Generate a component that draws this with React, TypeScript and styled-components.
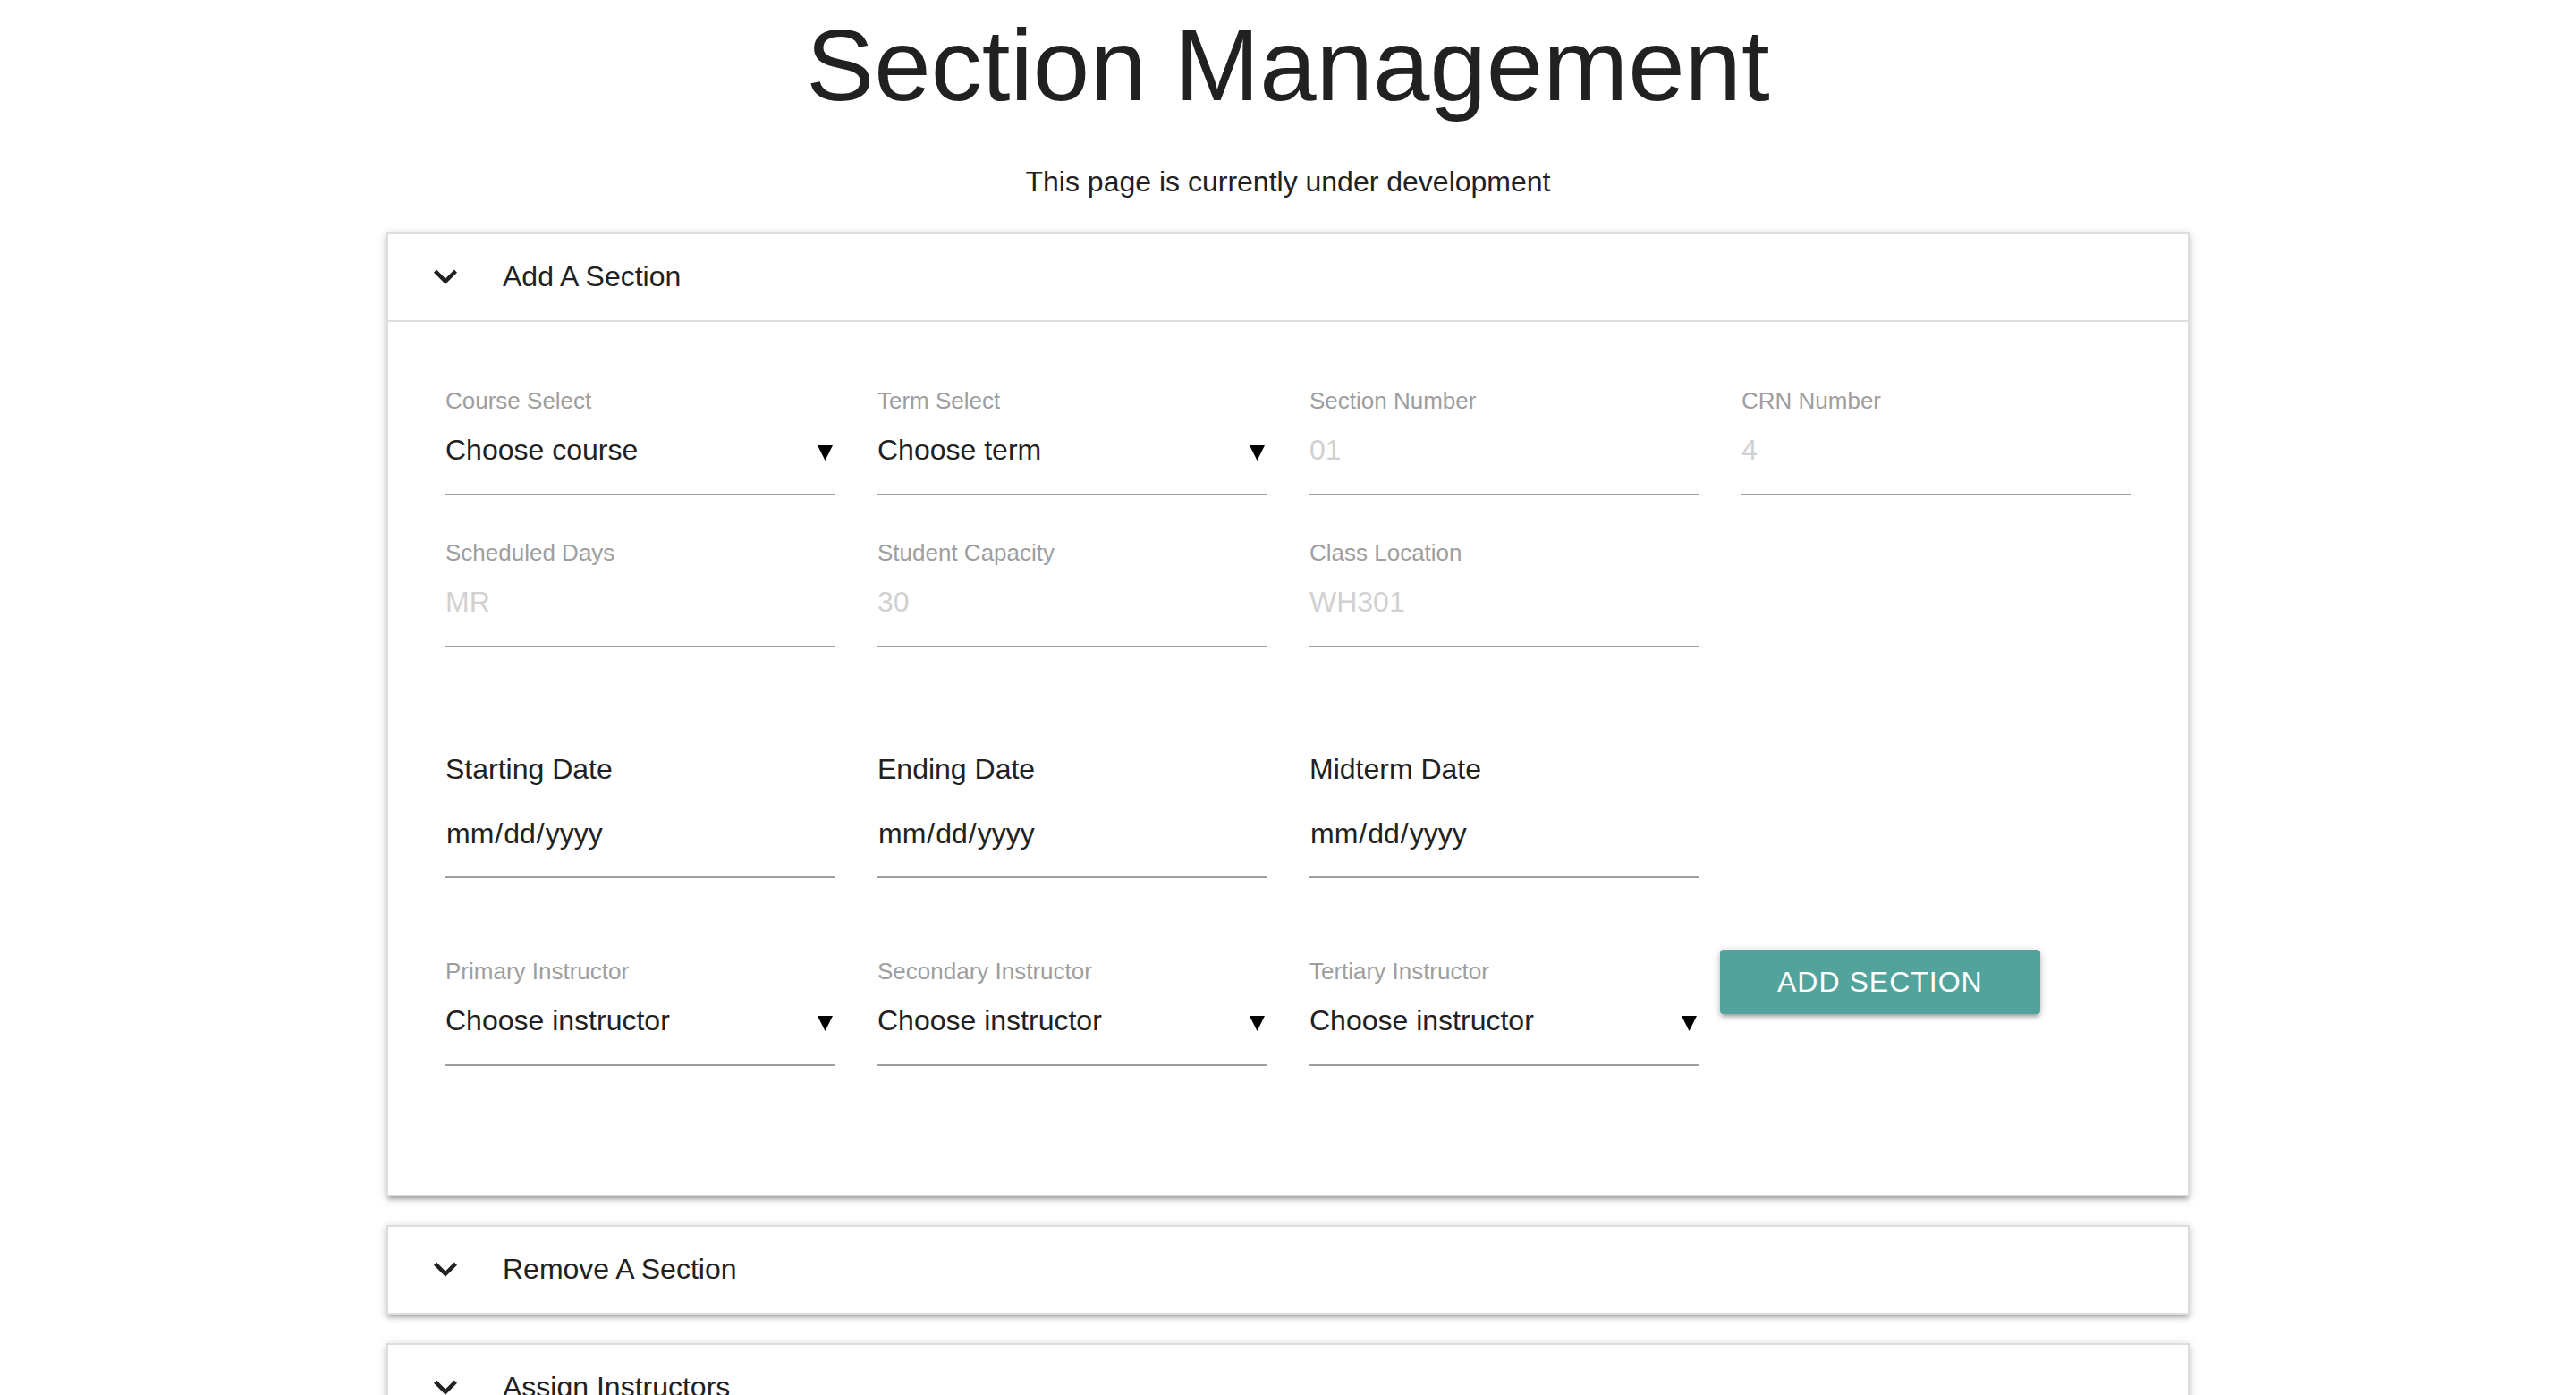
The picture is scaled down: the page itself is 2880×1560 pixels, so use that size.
import React, { useId, useState } from "react";
import styled, { createGlobalStyle } from "styled-components";

const colors = {
  text: "#212121",
  muted: "#9e9e9e",
  placeholder: "#d1d1d1",
  border: "#dddddd",
  accent: "#51a39b",
};

const shadow =
  "0 4px 4px rgba(0, 0, 0, 0.14), 0 6px 2px -4px rgba(0, 0, 0, 0.12), 0 2px 10px rgba(0, 0, 0, 0.2)";

const GlobalStyle = createGlobalStyle`
  *, *::before, *::after {
    box-sizing: border-box;
  }

  body {
    margin: 0;
    background: #ffffff;
    color: ${colors.text};
    font-family: "Liberation Sans", Arial, Helvetica, sans-serif;
    font-size: 32px;
    line-height: 48px;
  }
`;

const Page = styled.main`
  width: 70%;
  margin: 0 auto;
  padding: 10px 0 32px;
`;

const Title = styled.h1`
  margin: 0 0 44px;
  font-size: 114px;
  font-weight: 400;
  line-height: 125px;
  text-align: center;
`;

const Notice = styled.p`
  margin: 0 0 33px;
  text-align: center;
`;

const PanelList = styled.div`
  display: flex;
  flex-direction: column;
  gap: 32px;
`;

const Panel = styled.section`
  border: 2px solid ${colors.border};
  background: #ffffff;
  box-shadow: ${shadow};
`;

const PanelHeading = styled.h2`
  margin: 0;
  font: inherit;
`;

const PanelToggle = styled.button`
  display: flex;
  align-items: center;
  gap: 32px;
  width: 100%;
  padding: 23px 32px 25px;
  border: 0;
  background: transparent;
  color: inherit;
  font: inherit;
  text-align: left;
  cursor: pointer;
`;

const PanelIcon = styled.span`
  display: flex;
  align-items: center;
  justify-content: center;
  width: 64px;
  height: 48px;

  svg {
    flex: none;
    width: 52px;
    height: 52px;
    fill: currentColor;
  }
`;

const PanelBody = styled.div`
  border-top: 2px solid ${colors.border};
  padding: 64px 40px 144px;
`;

const Form = styled.form`
  display: flex;
  flex-direction: column;
`;

const Row = styled.div<{ $space?: number }>`
  display: grid;
  grid-template-columns: repeat(4, minmax(0, 1fr));
  align-items: start;
  margin-top: ${({ $space = 0 }) => $space}px;
`;

const Field = styled.div`
  display: flex;
  flex-direction: column;
  padding: 4px 24px 0;
`;

const Label = styled.label`
  color: ${colors.muted};
  font-size: 26px;
  line-height: 40px;
`;

const DateLabel = styled.label`
  line-height: 48px;
`;

const Control = styled.input`
  width: 100%;
  height: 86px;
  margin: 0;
  padding: 0 0 14px;
  border: 0;
  border-bottom: 2px solid ${colors.muted};
  border-radius: 0;
  outline: 0;
  background: transparent;
  color: inherit;
  font: inherit;

  &::placeholder {
    color: ${colors.placeholder};
    opacity: 1;
  }

  &:focus {
    border-bottom-color: ${colors.accent};
  }
`;

const DateControl = styled(Control)`
  height: 98px;
  padding: 0;

  &::-webkit-calendar-picker-indicator {
    display: none;
  }
`;

const SelectBox = styled.div`
  display: grid;
  align-items: center;

  > * {
    grid-area: 1 / 1;
  }
`;

const Select = styled(Control)`
  appearance: none;
  cursor: pointer;
`;

const Caret = styled.svg`
  justify-self: end;
  width: 17px;
  height: 17px;
  margin: 0 2px 10px 0;
  fill: #000000;
  pointer-events: none;
`;

const SubmitCell = styled.div`
  display: flex;
`;

const SubmitButton = styled.button`
  height: 72px;
  padding: 0 64px;
  border: 0;
  border-radius: 4px;
  background: ${colors.accent};
  box-shadow: ${shadow};
  color: #ffffff;
  font: inherit;
  line-height: 70px;
  letter-spacing: 1px;
  text-transform: uppercase;
  white-space: nowrap;
  cursor: pointer;
`;

function TextField({ label, placeholder }: { label: string; placeholder: string }) {
  const id = useId();
  return (
    <Field>
      <Label htmlFor={id}>{label}</Label>
      <Control id={id} type="text" placeholder={placeholder} />
    </Field>
  );
}

function SelectField({ label, prompt }: { label: string; prompt: string }) {
  const id = useId();
  return (
    <Field>
      <Label htmlFor={id}>{label}</Label>
      <SelectBox>
        <Select as="select" id={id} defaultValue="">
          <option value="">{prompt}</option>
        </Select>
        <Caret viewBox="0 0 17 17" aria-hidden="true">
          <path d="M0 0H17L8.5 17Z" />
        </Caret>
      </SelectBox>
    </Field>
  );
}

function DateField({ label }: { label: string }) {
  const id = useId();
  return (
    <Field>
      <DateLabel htmlFor={id}>{label}</DateLabel>
      <DateControl id={id} type="date" />
    </Field>
  );
}

function CollapsiblePanel({
  title,
  defaultOpen = false,
  children,
}: {
  title: string;
  defaultOpen?: boolean;
  children?: React.ReactNode;
}) {
  const [open, setOpen] = useState(defaultOpen);
  return (
    <Panel>
      <PanelHeading>
        <PanelToggle type="button" aria-expanded={open} onClick={() => setOpen(!open)}>
          <PanelIcon>
            <svg viewBox="0 0 24 24" aria-hidden="true">
              <path d="M16.59 8.59L12 13.17 7.41 8.59 6 10l6 6 6-6z" />
            </svg>
          </PanelIcon>
          {title}
        </PanelToggle>
      </PanelHeading>
      {open && children ? <PanelBody>{children}</PanelBody> : null}
    </Panel>
  );
}

export default function App() {
  return (
    <>
      <GlobalStyle />
      <Page>
        <Title>Section Management</Title>
        <Notice>This page is currently under development</Notice>
        <PanelList>
          <CollapsiblePanel title="Add A Section" defaultOpen>
            <Form onSubmit={(event) => event.preventDefault()}>
              <Row>
                <SelectField label="Course Select" prompt="Choose course" />
                <SelectField label="Term Select" prompt="Choose term" />
                <TextField label="Section Number" placeholder="01" />
                <TextField label="CRN Number" placeholder="4" />
              </Row>
              <Row $space={40}>
                <TextField label="Scheduled Days" placeholder="MR" />
                <TextField label="Student Capacity" placeholder="30" />
                <TextField label="Class Location" placeholder="WH301" />
              </Row>
              <Row $space={108}>
                <DateField label="Starting Date" />
                <DateField label="Ending Date" />
                <DateField label="Midterm Date" />
              </Row>
              <Row $space={80}>
                <SelectField label="Primary Instructor" prompt="Choose instructor" />
                <SelectField label="Secondary Instructor" prompt="Choose instructor" />
                <SelectField label="Tertiary Instructor" prompt="Choose instructor" />
                <SubmitCell>
                  <SubmitButton type="submit">Add Section</SubmitButton>
                </SubmitCell>
              </Row>
            </Form>
          </CollapsiblePanel>
          <CollapsiblePanel title="Remove A Section" />
          <CollapsiblePanel title="Assign Instructors" />
        </PanelList>
      </Page>
    </>
  );
}
